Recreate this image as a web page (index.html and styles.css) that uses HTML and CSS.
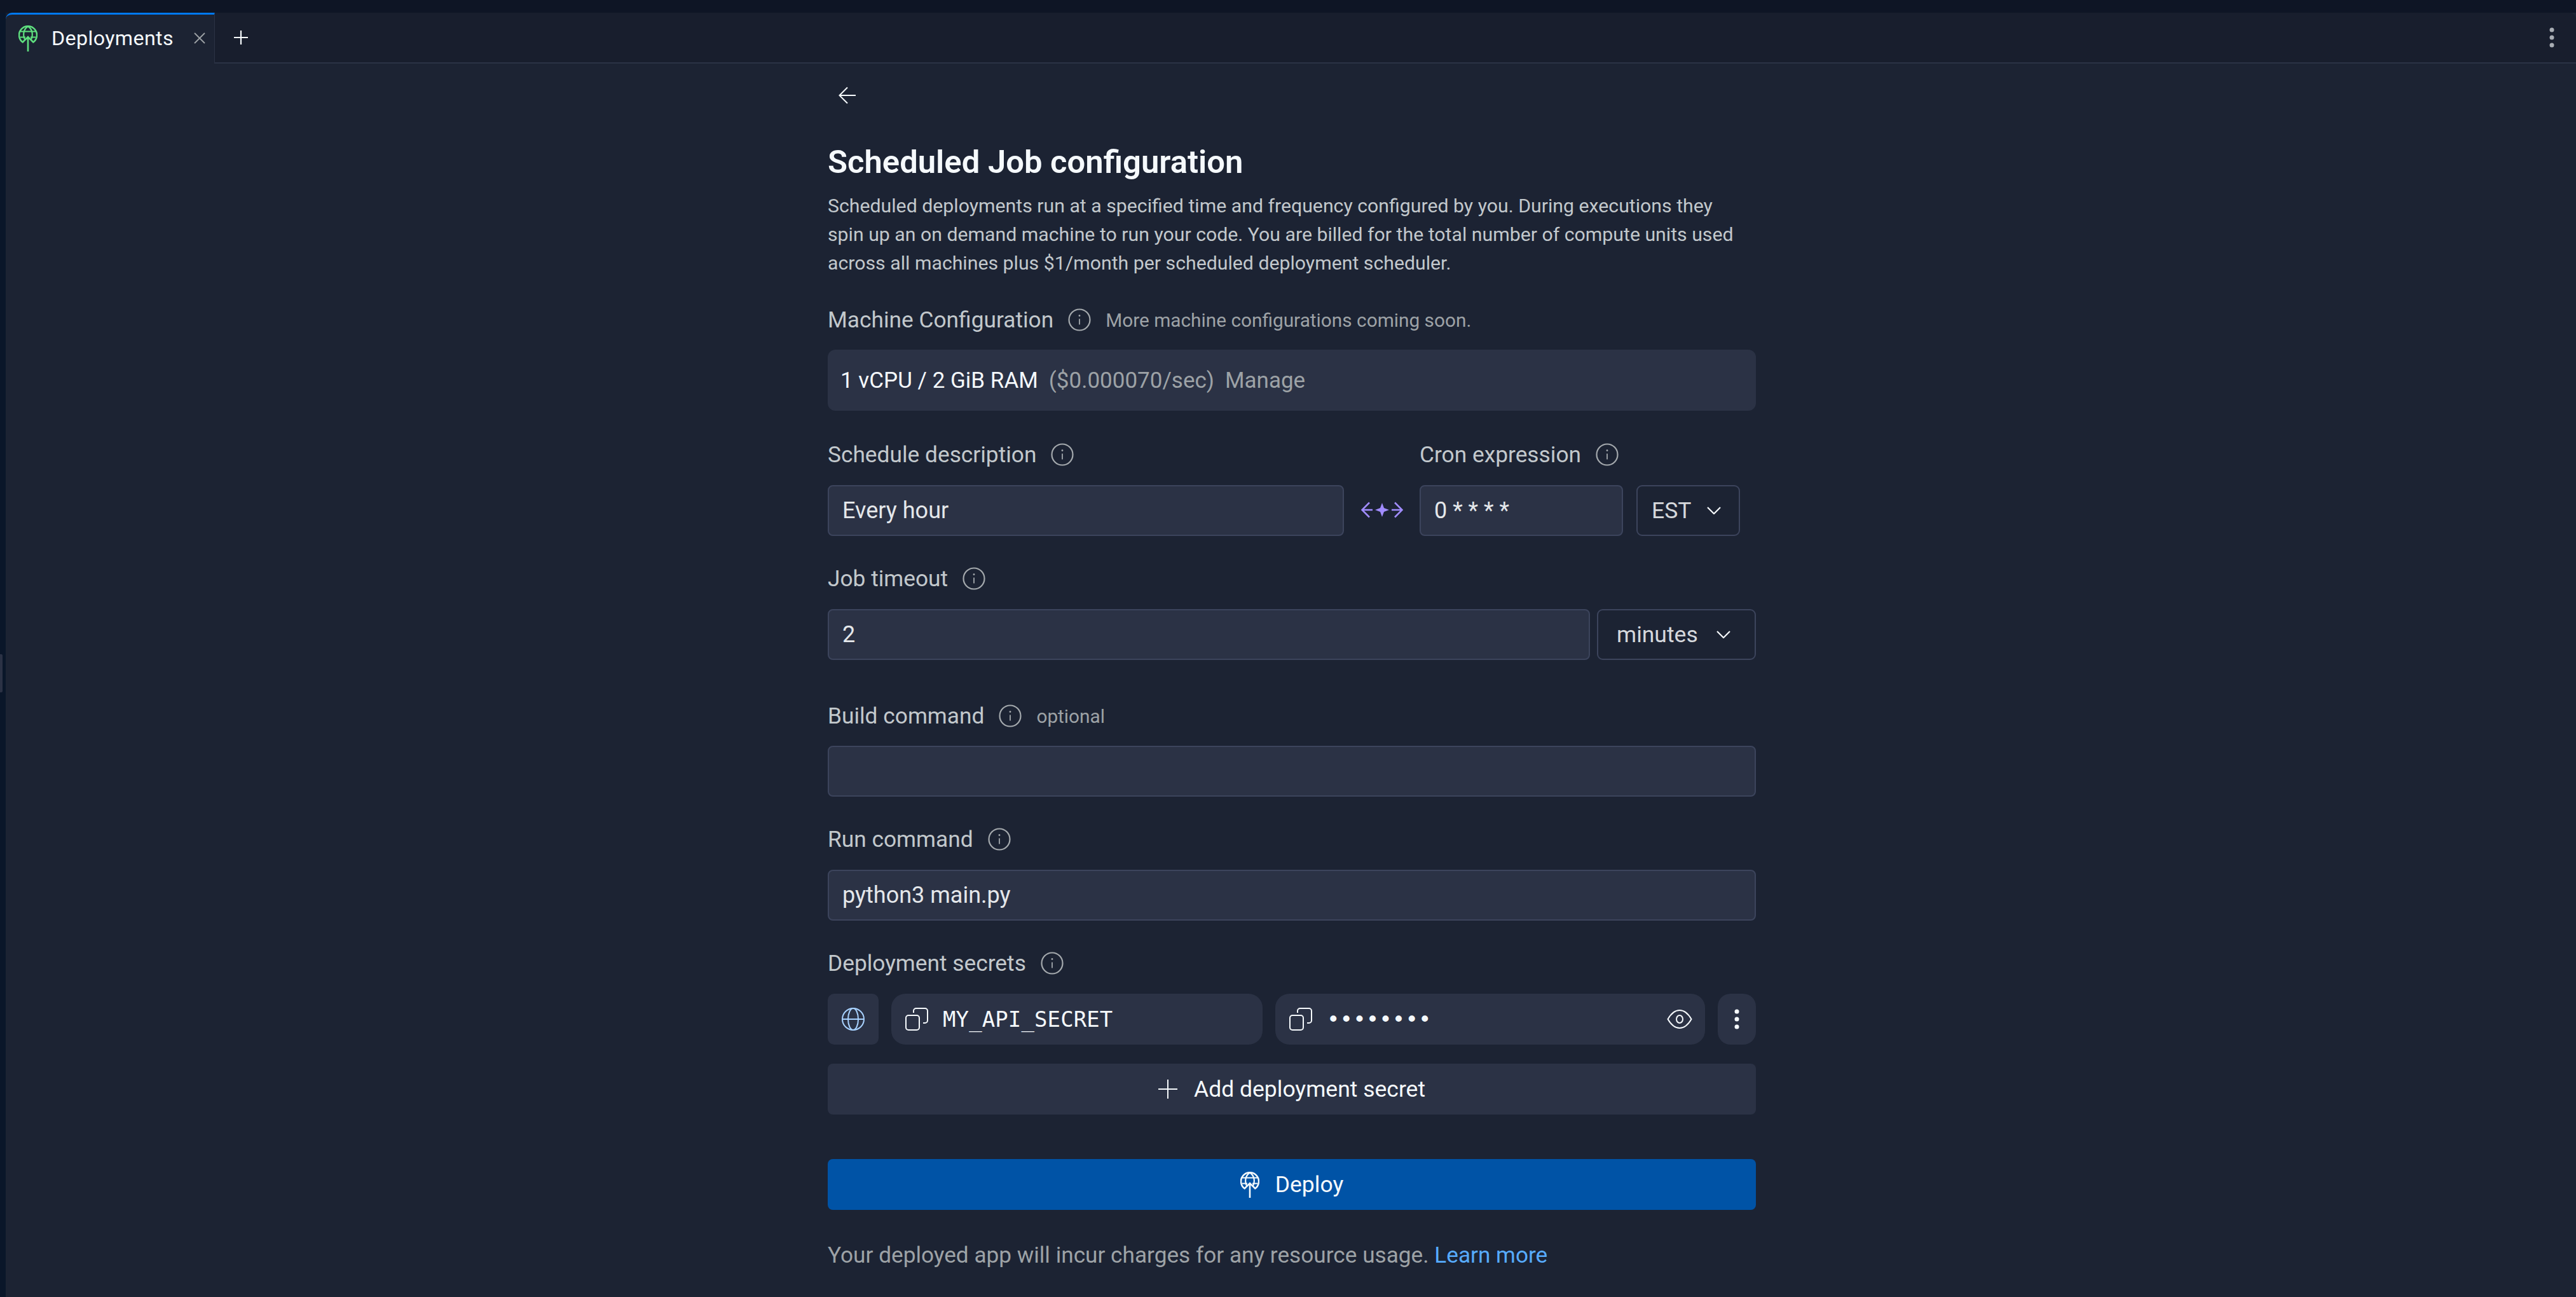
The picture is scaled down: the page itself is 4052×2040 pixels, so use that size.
FILE: index.html
```html
<!DOCTYPE html>
<html lang="en">
<head>
<meta charset="utf-8">
<title>Deployments</title>
<link rel="stylesheet" href="styles.css">
</head>
<body>
<svg class="sprites" width="0" height="0" aria-hidden="true">
  <defs>
    <symbol id="logo" viewBox="0 0 30 41">
      <path d="M7.500 27A14 14 0 1 1 22.500 27" fill="none" stroke="currentColor" stroke-width="2.500"/>
      <path d="M10.500 23C6.500 16 7.500 6 15 1.500C22.500 6 23.500 16 19.500 23" fill="none" stroke="currentColor" stroke-width="2.200"/>
      <path d="M2 9.500H28M3 18.500H11M19 18.500H27" fill="none" stroke="currentColor" stroke-width="2.200"/>
      <path d="M15 41V18M6.500 26.500L15 18L23.500 26.500" fill="none" stroke="currentColor" stroke-width="2.600"/>
    </symbol>
    <symbol id="info" viewBox="0 0 36 36">
      <circle cx="18" cy="18" r="16.500" fill="none" stroke="currentColor" stroke-width="2.200"/>
      <path d="M18 16.500V25.500" fill="none" stroke="currentColor" stroke-width="1.800"/>
      <circle cx="18" cy="11.500" r="1.400" fill="currentColor"/>
    </symbol>
    <symbol id="chev" viewBox="0 0 22 12">
      <path d="M1 1L11 11L21 1" fill="none" stroke="currentColor" stroke-width="2.200"/>
    </symbol>
    <symbol id="copy" viewBox="0 0 36 36">
      <rect x="1" y="12" width="21" height="23" rx="4" fill="none" stroke="currentColor" stroke-width="2"/>
      <path d="M13 8V5A4 4 0 0 1 17 1H31A4 4 0 0 1 35 5V20A4 4 0 0 1 31 24H28" fill="none" stroke="currentColor" stroke-width="2"/>
    </symbol>
  </defs>
</svg>
<div class="strip"></div>
<div class="shell">
  <div class="rail"><div class="handle"></div></div>
  <div class="workspace">
    <header class="tabbar">
      <div class="tab">
        <svg class="tab-logo"><use href="#logo"/></svg>
        <span class="tab-title">Deployments</span>
        <svg class="tab-close" viewBox="0 0 18 18"><path d="M1 1L17 17M17 1L1 17" fill="none" stroke="currentColor" stroke-width="1.800"/></svg>
      </div>
      <svg class="tab-add" viewBox="0 0 22 22"><path d="M11 0V22M0 11H22" fill="none" stroke="currentColor" stroke-width="2.200"/></svg>
      <svg class="tab-menu" viewBox="0 0 8 32"><circle cx="4" cy="4" r="3.500"/><circle cx="4" cy="16" r="3.500"/><circle cx="4" cy="28" r="3.500"/></svg>
    </header>
    <main class="form">
      <div class="back">
        <svg class="back-arrow" viewBox="0 0 28 28"><path d="M27 14H2M14 1.500L1.500 14L14 26.500" fill="none" stroke="currentColor" stroke-width="2"/></svg>
      </div>
      <h1 class="title">Scheduled Job configuration</h1>
      <p class="desc">Scheduled deployments run at a specified time and frequency configured by you. During executions they<br>spin up an on demand machine to run your code. You are billed for the total number of compute units used<br>across all machines plus $1/month per scheduled deployment scheduler.</p>

      <div class="label label-machine"><span>Machine Configuration</span><svg class="info"><use href="#info"/></svg><span class="hint">More machine configurations coming soon.</span></div>
      <div class="machine"><span class="machine-name">1 vCPU / 2 GiB RAM</span><span class="machine-price">($0.000070/sec)</span><span class="machine-price">Manage</span></div>

      <div class="schedule">
        <div class="schedule-desc">
          <div class="label"><span>Schedule description</span><svg class="info"><use href="#info"/></svg></div>
          <div class="input">Every hour</div>
        </div>
        <svg class="swap" viewBox="0 0 66 26">
          <path d="M13 1.500L1.500 13L13 24.500M53 1.500L64.500 13L53 24.500" fill="none" stroke="currentColor" stroke-width="2.600"/>
          <path d="M2 13H18M48 13H64" fill="none" stroke="currentColor" stroke-width="2.600"/>
          <path d="M33 2L36 10L44 13L36 16L33 24L30 16L22 13L30 10Z" fill="currentColor"/>
        </svg>
        <div class="schedule-cron">
          <div class="label"><span>Cron expression</span><svg class="info"><use href="#info"/></svg></div>
          <div class="cron-row">
            <div class="input cron-input">0 * * * *</div>
            <div class="select select-tz">EST<svg class="chev"><use href="#chev"/></svg></div>
          </div>
        </div>
      </div>

      <div class="label label-spaced"><span>Job timeout</span><svg class="info"><use href="#info"/></svg></div>
      <div class="timeout-row">
        <div class="input timeout-input">2</div>
        <div class="select select-unit">minutes<svg class="chev"><use href="#chev"/></svg></div>
      </div>

      <div class="label label-build"><span>Build command</span><svg class="info"><use href="#info"/></svg><span class="hint">optional</span></div>
      <div class="input"></div>

      <div class="label label-spaced"><span>Run command</span><svg class="info"><use href="#info"/></svg></div>
      <div class="input">python3 main.py</div>

      <div class="label label-spaced"><span>Deployment secrets</span><svg class="info"><use href="#info"/></svg></div>
      <div class="secret-row">
        <div class="icon-box icon-box-globe">
          <svg class="globe" viewBox="0 0 36 36"><circle cx="18" cy="18" r="17" fill="none" stroke="currentColor" stroke-width="2"/><ellipse cx="18" cy="18" rx="8" ry="17" fill="none" stroke="currentColor" stroke-width="2"/><path d="M1 18H35" fill="none" stroke="currentColor" stroke-width="2"/></svg>
        </div>
        <div class="secret secret-key"><svg class="copy"><use href="#copy"/></svg><span class="mono">MY_API_SECRET</span></div>
        <div class="secret secret-value"><svg class="copy"><use href="#copy"/></svg><span class="mono dots">••••••••</span>
          <svg class="eye" viewBox="0 0 40 30"><path d="M1.500 15C7 5.500 13 1 20 1S33 5.500 38.500 15C33 24.500 27 29 20 29S7 24.500 1.500 15Z" fill="none" stroke="currentColor" stroke-width="2"/><ellipse cx="20" cy="15" rx="5" ry="6" fill="none" stroke="currentColor" stroke-width="2"/></svg>
        </div>
        <div class="icon-box icon-box-more">
          <svg class="more" viewBox="0 0 8 32"><circle cx="4" cy="4" r="3.500"/><circle cx="4" cy="16" r="3.500"/><circle cx="4" cy="28" r="3.500"/></svg>
        </div>
      </div>
      <div class="btn btn-add"><svg class="plus" viewBox="0 0 30 30"><path d="M15 0V30M0 15H30" fill="none" stroke="currentColor" stroke-width="2"/></svg><span>Add deployment secret</span></div>
      <div class="btn btn-deploy"><svg class="deploy-logo"><use href="#logo"/></svg><span>Deploy</span></div>
      <p class="foot">Your deployed app will incur charges for any resource usage. <a class="link">Learn more</a></p>
    </main>
  </div>
</div>
</body>
</html>
```
FILE: styles.css
```css
* { box-sizing: border-box; }
html, body { margin: 0; height: 100%; }
body {
  background: #0e1525;
  color: #f5f9fc;
  font-family: Roboto, "Liberation Sans", sans-serif;
  font-size: 36px;
  overflow: hidden;
}
.sprites { position: absolute; }
.strip { height: 20px; background: #0e1525; }
.shell { display: flex; height: 2020px; }
.rail { width: 9px; flex: none; background: #0a1629; display: flex; align-items: flex-start; }
.handle { width: 4px; height: 60px; margin-top: 1009px; background: #2b3245; border-radius: 0 2px 2px 0; }
.workspace { flex: 1; min-width: 0; background: #1c2333; }

.tabbar {
  height: 80px;
  display: flex;
  align-items: center;
  background: #181e2d;
  border-bottom: 2px solid #2b3245;
  border-top-right-radius: 10px;
  padding-right: 34px;
}
.tab {
  width: 329px;
  height: 80px;
  align-self: flex-start;
  display: flex;
  align-items: center;
  background: #1c2333;
  border-top: 3px solid #0079f2;
  border-right: 1px solid #2b3245;
  border-top-left-radius: 10px;
  padding: 0 0 3px 20px;
}
.tab-logo { width: 30px; height: 41px; color: #5fe07f; flex: none; }
.tab-title { margin-left: 22px; width: 224px; font-size: 32.200px; letter-spacing: .4px; }
.tab-close { width: 18px; height: 18px; color: #9da2a6; }
.tab-add { width: 22px; height: 22px; margin-left: 30px; }
.tab-menu { width: 8px; height: 32px; margin-left: auto; fill: #a8adb3; }

.form { width: 1460px; margin: 0 0 0 1293px; }
.back { height: 40px; margin-top: 30px; padding: 6px 0 0 17px; }
.back-arrow { width: 28px; height: 28px; display: block; }
.title { margin: 55px 0 0; font-size: 50.800px; line-height: 60px; font-weight: 600; }
.desc { margin: 16px 0 0; font-size: 30.250px; line-height: 45px; color: #c2c8cc; white-space: nowrap; }

.label {
  height: 40px;
  display: flex;
  align-items: center;
  gap: 23px;
  margin-bottom: 28px;
  color: #c2c8cc;
  font-size: 35.300px;
  white-space: nowrap;
}
.label-machine { margin-top: 47px; margin-bottom: 27px; }
.label-spaced { margin-top: 47px; }
.label-build { margin-top: 68px; margin-bottom: 27px; }
.info { width: 36px; height: 36px; color: #a4a9ad; flex: none; }
.hint { font-size: 29.800px; color: #9da2a6; }

.machine {
  height: 96px;
  display: flex;
  align-items: center;
  gap: 17px;
  padding-left: 20px;
  background: #2b3245;
  border-radius: 12px;
  font-size: 35px;
}
.machine-price { color: #9da2a6; }

.schedule { display: flex; margin-top: 49px; }
.schedule-desc { width: 812px; flex: none; }
.swap { width: 66px; height: 26px; flex: none; margin: 94px 26px 0 27px; color: #a18cff; }
.schedule-cron { flex: 1; }
.cron-row { display: flex; gap: 21px; }
.cron-input { width: 320px; }

.input {
  height: 80px;
  display: flex;
  align-items: center;
  padding: 0 21px;
  background: #2b3245;
  border: 2px solid #3c445c;
  border-radius: 8px;
  color: #e4e7ea;
  font-size: 36px;
}
.select {
  height: 80px;
  display: flex;
  align-items: center;
  justify-content: space-between;
  background: transparent;
  border: 2px solid #3c445c;
  border-radius: 9px;
  color: #d5d8dc;
  font-size: 35.500px;
}
.select-tz { width: 163px; padding: 0 28px 0 22px; }
.select-unit { width: 250px; padding: 0 38px 0 29px; }
.chev { width: 22px; height: 12px; flex: none; color: #f5f9fc; }
.timeout-row { display: flex; gap: 11px; }
.timeout-input { width: 1199px; }

.secret-row { display: flex; gap: 20px; margin-top: 1px; }
.icon-box, .secret { height: 80px; background: #2b3245; display: flex; align-items: center; flex: none; }
.icon-box { justify-content: center; }
.icon-box-globe { width: 80px; border-radius: 10px; }
.icon-box-more { width: 60px; border-radius: 20px; }
.secret { border-radius: 22px; padding-left: 22px; }
.secret-key { width: 584px; }
.secret-value { width: 676px; }
.globe { width: 36px; height: 36px; color: #a8d2ff; }
.copy { width: 36px; height: 36px; flex: none; }
.mono { margin-left: 23px; font-family: "DejaVu Sans Mono", monospace; font-size: 34px; letter-spacing: .1px; }
.eye { width: 40px; height: 30px; margin-left: auto; margin-right: 20px; }
.more { width: 8px; height: 32px; fill: #f5f9fc; }

.btn { height: 80px; display: flex; align-items: center; justify-content: center; font-size: 35.500px; border-radius: 8px; }
.btn-add { margin-top: 30px; background: #2b3245; gap: 26px; }
.plus { width: 30px; height: 30px; }
.btn-deploy { margin-top: 70px; background: #0053a6; gap: 25px; }
.deploy-logo { width: 30px; height: 41px; }
.foot { margin: 51px 0 0; line-height: 40px; font-size: 35.200px; color: #9da2a6; white-space: nowrap; }
.link { color: #57abff; }
```
